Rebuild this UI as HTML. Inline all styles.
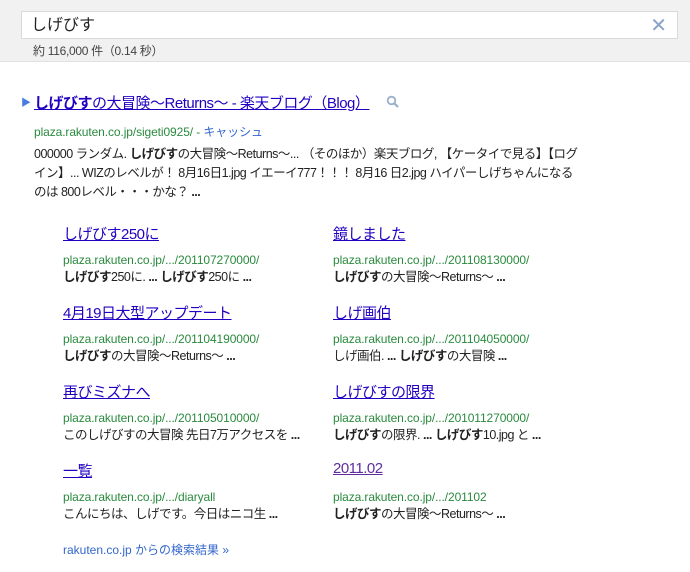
<html><head><style>
body{margin:0;width:690px;height:572px;background:#fff;font-family:"Liberation Sans","Noto Sans CJK JP",sans-serif;position:relative;overflow:hidden}
.hdr{position:absolute;left:0;top:0;width:690px;height:61px;background:#f1f1f1;border-bottom:1px solid #e0e0e0}
.box{position:absolute;left:21px;top:11px;width:657px;height:28px;background:#fff;border:1px solid #d9d9d9;font-size:16px;line-height:28px;box-sizing:border-box;padding-left:9px;color:#222}
.x{position:absolute;right:10px;top:0;color:#8aa2c8;font-size:20px}
.cnt{position:absolute;left:33px;top:42px;font-size:12px;color:#444;letter-spacing:-0.3px}
.a{position:absolute;white-space:nowrap}
.t{font-size:15px;color:#2200c1;text-decoration:underline;letter-spacing:-0.5px}
.u{font-size:12px;color:#2a8a3e;letter-spacing:-0.1px}
.s{font-size:12.5px;color:#222;line-height:19px;letter-spacing:-0.5px}
.st{font-size:15px;color:#2200c1;text-decoration:underline;letter-spacing:-0.5px}
.v{color:#5d2da0}
</style></head><body>
<div class="hdr"><div class="box">しげびす<span class="x">✕</span></div><div class="cnt">約 116,000 件（0.14 秒）</div></div>
<div class="a" style="left:21px;top:94px;color:#4a7be0;font-size:10px">▶</div>
<div class="a t" style="left:34px;top:92px"><b>しげびす</b>の大冒険～Returns～ - 楽天ブログ（Blog）</div>
<svg class="a" style="left:386px;top:95px" width="14" height="14" viewBox="0 0 14 14"><circle cx="5.5" cy="5.5" r="3.8" fill="none" stroke="#9ab0cc" stroke-width="1.8"/><path d="M8.3 8.3 L12 12" stroke="#9ab0cc" stroke-width="2.2"/></svg>
<div class="a u" style="left:34px;top:123px">plaza.rakuten.co.jp/sigeti0925/ - <span style="color:#3366cc">キャッシュ</span></div>
<div class="a s" style="left:34px;top:145px">000000 ランダム. <b>しげびす</b>の大冒険～Returns～... （そのほか）楽天ブログ, 【ケータイで見る】【ログ<br>イン】... WIZのレベルが！ 8月16日1.jpg イエーイ777！！！ 8月16 日2.jpg ハイパーしげちゃんになる<br>のは 800レベル・・・かな？ <b>...</b></div>

<div class="a st" style="left:63px;top:223px">しげびす250に</div>
<div class="a u" style="left:63px;top:253px">plaza.rakuten.co.jp/.../201107270000/</div>
<div class="a s" style="left:63px;top:268px"><b>しげびす</b>250に. <b>... しげびす</b>250に <b>...</b></div>
<div class="a st" style="left:333px;top:223px">鏡しました</div>
<div class="a u" style="left:333px;top:253px">plaza.rakuten.co.jp/.../201108130000/</div>
<div class="a s" style="left:333px;top:268px"><b>しげびす</b>の大冒険～Returns～ <b>...</b></div>

<div class="a st" style="left:63px;top:302px">4月19日大型アップデート</div>
<div class="a u" style="left:63px;top:332px">plaza.rakuten.co.jp/.../201104190000/</div>
<div class="a s" style="left:63px;top:347px"><b>しげびす</b>の大冒険～Returns～ <b>...</b></div>
<div class="a st" style="left:333px;top:302px">しげ画伯</div>
<div class="a u" style="left:333px;top:332px">plaza.rakuten.co.jp/.../201104050000/</div>
<div class="a s" style="left:333px;top:347px">しげ画伯. <b>... しげびす</b>の大冒険 <b>...</b></div>

<div class="a st" style="left:63px;top:381px">再びミズナへ</div>
<div class="a u" style="left:63px;top:411px">plaza.rakuten.co.jp/.../201105010000/</div>
<div class="a s" style="left:63px;top:426px">このしげびすの大冒険 先日7万アクセスを <b>...</b></div>
<div class="a st" style="left:333px;top:381px">しげびすの限界</div>
<div class="a u" style="left:333px;top:411px">plaza.rakuten.co.jp/.../201011270000/</div>
<div class="a s" style="left:333px;top:426px"><b>しげびす</b>の限界. <b>... しげびす</b>10.jpg と <b>...</b></div>

<div class="a st" style="left:63px;top:460px">一覧</div>
<div class="a u" style="left:63px;top:490px">plaza.rakuten.co.jp/.../diaryall</div>
<div class="a s" style="left:63px;top:505px">こんにちは、しげです。今日はニコ生 <b>...</b></div>
<div class="a st v" style="left:333px;top:460px;text-decoration:underline">2011.02</div>
<div class="a u" style="left:333px;top:490px">plaza.rakuten.co.jp/.../201102</div>
<div class="a s" style="left:333px;top:505px"><b>しげびす</b>の大冒険～Returns～ <b>...</b></div>

<div class="a" style="left:63px;top:541px;font-size:12px;color:#3366cc">rakuten.co.jp からの検索結果 »</div>
</body></html>
